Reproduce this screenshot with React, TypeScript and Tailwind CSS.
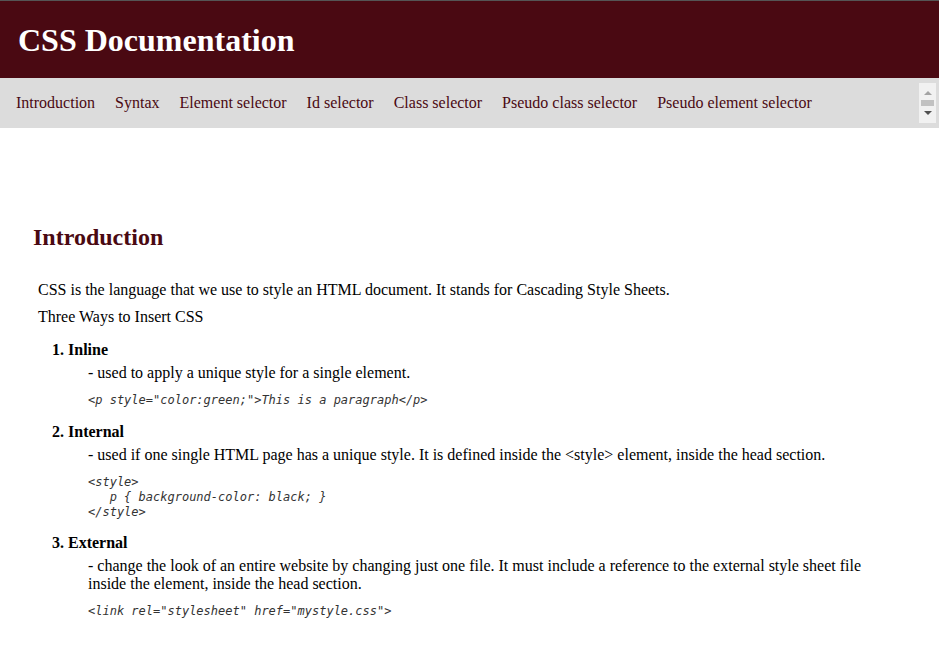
const navLinks = [
  "Introduction",
  "Syntax",
  "Element selector",
  "Id selector",
  "Class selector",
  "Pseudo class selector",
  "Pseudo element selector",
];

const serif = "font-['Liberation_Serif','Times_New_Roman',serif]";
const mono = "font-['DejaVu_Sans_Mono','Liberation_Mono',monospace]";

function Code({ lines }: { lines: string[] }) {
  return (
    <pre className={`${mono} italic text-[12px] leading-[15px] text-[#333] whitespace-pre`}>
      {lines.join("\n")}
    </pre>
  );
}

function Way({
  num,
  title,
  desc,
  code,
  className,
}: {
  num: string;
  title: string;
  desc: string;
  code: string[];
  className?: string;
}) {
  return (
    <li className={className}>
      <h3 className="pl-[14px] font-bold text-[16px] leading-[18px]">
        {num}. {title}
      </h3>
      <div className="pl-[50px]">
        <p className="mt-[5px] text-[16px] leading-[18px]">{desc}</p>
        <div className="mt-[11px]">
          <Code lines={code} />
        </div>
      </div>
    </li>
  );
}

export default function App() {
  return (
    <div className={`${serif} min-h-[655px] bg-white text-black`}>
      <header className="border-t border-[#555] bg-[#4a0912] h-[78px] flex items-center pl-[18px]">
        <h1 className="text-white font-bold text-[32px] leading-none">CSS Documentation</h1>
      </header>

      <nav className="bg-[#dcdcdc] h-[50px] flex items-center justify-between pl-[16px] pr-[3px]">
        <ul className="flex gap-[20px] text-[16px] text-[#4a0912]">
          {navLinks.map((link) => (
            <li key={link}>{link}</li>
          ))}
        </ul>
        <div className="w-[17px] h-[40px] bg-[#f1f1f1] flex flex-col items-center justify-center gap-[3px]">
          <div className="w-0 h-0 border-l-[4px] border-r-[4px] border-b-[4px] border-l-transparent border-r-transparent border-b-[#a3a3a3]" />
          <div className="w-[13px] h-[6px] bg-[#c1c1c1] my-[2px]" />
          <div className="w-0 h-0 border-l-[4px] border-r-[4px] border-t-[4px] border-l-transparent border-r-transparent border-t-[#505050]" />
        </div>
      </nav>

      <main className="pl-[33px] pr-[50px] pt-[95px] pb-[30px]">
        <h2 className="text-[#4a0912] font-bold text-[24px] leading-[28px]">Introduction</h2>
        <div className="pl-[5px]">
          <p className="mt-[30px] text-[16px] leading-[18px]">
            CSS is the language that we use to style an HTML document. It stands for Cascading Style Sheets.
          </p>
          <p className="mt-[9px] text-[16px] leading-[18px]">Three Ways to Insert CSS</p>
          <ol className="mt-[15px]">
            <Way
              num="1"
              title="Inline"
              desc="- used to apply a unique style for a single element."
              code={['<p style="color:green;">This is a paragraph</p>']}
            />
            <Way
              className="mt-[15px]"
              num="2"
              title="Internal"
              desc="- used if one single HTML page has a unique style. It is defined inside the <style> element, inside the head section."
              code={["<style>", "   p { background-color: black; }", "</style>"]}
            />
            <Way
              className="mt-[14px]"
              num="3"
              title="External"
              desc="- change the look of an entire website by changing just one file. It must include a reference to the external style sheet file inside the element, inside the head section."
              code={['<link rel="stylesheet" href="mystyle.css">']}
            />
          </ol>
        </div>
      </main>
    </div>
  );
}
